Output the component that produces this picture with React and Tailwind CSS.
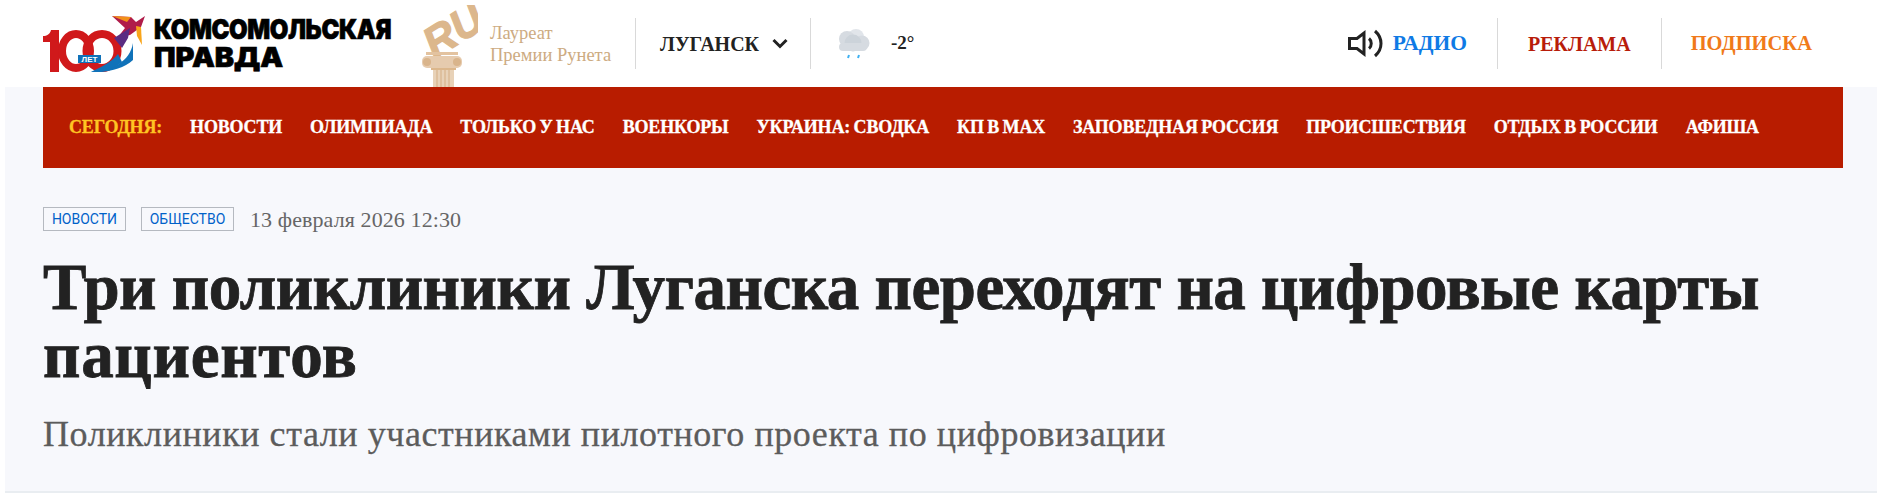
import React from "react";

const navItems = [
  "Новости",
  "Олимпиада",
  "Только у нас",
  "Военкоры",
  "Украина: сводка",
  "КП в MAX",
  "Заповедная Россия",
  "Происшествия",
  "Отдых в России",
  "Афиша",
];

// logo: red 100, blue swoosh, bird. viewBox is in page pixels
const Logo = () => (
  <svg width="102" height="56" viewBox="43 14 102 56" className="shrink-0">
    <path d="M51 28 L59 28 L59 70 L50 70 L50 40 L43 40 L43 34 C47 34 50 32 51 28 Z" fill="#d0191b" />
    <ellipse cx="76" cy="49" rx="14" ry="17" fill="none" stroke="#d0191b" strokeWidth="8" />
    <ellipse cx="102" cy="49" rx="15.5" ry="17" fill="none" stroke="#d0191b" strokeWidth="8" />
    <path d="M91 70 C112 68 130 60 133 41 L133 58 C122 68 104 71 91 70 Z" fill="#1072b9" />
    <path d="M91 70 C98 66 110 62 118 52 L122 60 C112 68 102 71 91 70 Z" fill="#1072b9" />
    <rect x="78" y="53" width="23" height="8" fill="#1072b9" />
    <text x="89.5" y="60" textAnchor="middle" fontSize="8" fontWeight="700" fill="#fff" fontFamily="Liberation Sans">ЛЕТ</text>
    <path d="M112 14 L131 15 L136 20 L145 14 L141 25 L130 33 L118 35 L125 26 Z" fill="#b01c4a" />
    <path d="M114 36 L130 26 L128 36 L122 46 Z" fill="#5a2d82" />
    <path d="M112 14 L131 15 L127 20 Z" fill="#f39019" />
    <path d="M136 24 L141 25 L142 43 L137 34 Z" fill="#f9a51a" />
  </svg>
);

// RU statue on a column
const Award = () => (
  <svg width="57" height="82" viewBox="421 5 57 82" className="shrink-0">
    <text x="453" y="45" textAnchor="middle" fontSize="43" fontWeight="700" fontStyle="italic" fill="#dcb78c" stroke="#dcb78c" strokeWidth="1.2" fontFamily="Liberation Sans" transform="rotate(-32 453 30)">RU</text>
    <rect x="426" y="52" width="32" height="3" fill="#e3c3a0" />
    <rect x="422" y="56" width="40" height="12" rx="5" fill="#e6cbae" />
    <circle cx="427" cy="62" r="4" fill="#d9b48b" />
    <circle cx="457" cy="62" r="4" fill="#d9b48b" />
    <rect x="431" y="68" width="25" height="2" fill="#dcb78c" />
    <rect x="433" y="70" width="21" height="17" fill="#e8d2b8" />
    <path d="M437 70 V87 M441 70 V87 M445 70 V87 M449 70 V87" stroke="#d4ae84" strokeWidth="1" />
  </svg>
);

const Weather = () => (
  <svg width="34" height="31" viewBox="0 0 34 31" className="shrink-0">
    <circle cx="20" cy="9" r="8" fill="#e1e5ea" />
    <circle cx="11" cy="11" r="8" fill="#d6dbe1" />
    <circle cx="26" cy="15" r="7.5" fill="#d6dbe1" />
    <circle cx="17" cy="15" r="8.5" fill="#ccd3da" />
    <rect x="3" y="15" width="28" height="8" rx="4" fill="#d6dbe1" />
    <path d="M13 27 L12 30 M23 27 L22 30" stroke="#3fb1f2" strokeWidth="2" />
  </svg>
);

const Speaker = () => (
  <svg width="36" height="29" viewBox="0 0 36 29" fill="none" stroke="#222" strokeWidth="3" className="shrink-0">
    <path d="M1.5 9.5 H9 L16 4 V25 L9 19.5 H1.5 Z" />
    <path d="M21 9.5 C24 12 24 17 21 19.5" />
    <path d="M27 2 C35 9 35 20 27 27" />
  </svg>
);

const Chevron = () => (
  <svg width="16" height="11" viewBox="0 0 16 11" fill="none" stroke="#222" strokeWidth="3" className="shrink-0">
    <path d="M1.5 2 L8 8.5 L14.5 2" />
  </svg>
);

const Divider = () => <div className="h-[51px] w-px bg-[#d9d9d9] shrink-0" />;

export default function App() {
  return (
    <div className="h-[493px] w-[1877px] bg-white overflow-hidden font-['Liberation_Serif',serif]">
      <header className="h-[87px] flex items-center pl-[43px]">
        <Logo />
        <div className="ml-[9px] w-[246px] font-['Inter',sans-serif] font-black text-[24px] leading-[25px] text-black uppercase whitespace-nowrap [-webkit-text-stroke:0.6px_#000]">
          <div className="origin-left scale-y-[1.12] tracking-[-0.4px]">Комсомольская</div>
          <div className="mt-[3px] origin-left scale-x-[1.2] scale-y-[1.12]">Правда</div>
        </div>
        <div className="ml-[21px] self-end"><Award /></div>
        <div className="ml-[12px] w-[122px] text-[18.5px] leading-[22px] text-[#cdab82] whitespace-nowrap">
          <div>Лауреат</div>
          <div>Премии Рунета</div>
        </div>
        <div className="ml-[23px]"><Divider /></div>
        <div className="ml-[24px] w-[98px] font-bold text-[20px] text-[#222] whitespace-nowrap">ЛУГАНСК</div>
        <div className="ml-[14px]"><Chevron /></div>
        <div className="ml-[22px]"><Divider /></div>
        <div className="ml-[25px]"><Weather /></div>
        <div className="ml-[21px] font-bold text-[19px] text-[#222]">-2°</div>
        <div className="ml-auto flex items-center pr-[65px]">
          <Speaker />
          <span className="ml-[9px] font-bold text-[21.5px] text-[#0f7ae5]">РАДИО</span>
          <div className="ml-[30px]"><Divider /></div>
          <span className="ml-[30px] font-bold text-[20px] text-[#b81c0a]">РЕКЛАМА</span>
          <div className="ml-[30px]"><Divider /></div>
          <span className="ml-[29px] font-bold text-[20.5px] text-[#f07a1a]">ПОДПИСКА</span>
        </div>
      </header>

      <div className="ml-[5px] h-[406px] bg-[#f7f8fc] border-b-2 border-[#e9edf1] pl-[38px] pr-[34px]">
        <nav className="h-[81px] bg-[#b81c00] flex items-center pl-[26px] gap-[28px] text-[18px] tracking-[-0.18px] [word-spacing:-0.8px] font-bold uppercase text-white whitespace-nowrap [-webkit-text-stroke:0.3px]">
          <span className="text-[#ffc423]">Сегодня:</span>
          {navItems.map((item) => (
            <a key={item}>{item}</a>
          ))}
        </nav>

        <div className="mt-[39px] flex items-center h-[24px]">
          <span className="h-[24px] w-[83px] flex items-center justify-center border border-[#b5b9c0] font-['Roboto',sans-serif] text-[14px] text-[#0061c9]">НОВОСТИ</span>
          <span className="ml-[15px] h-[24px] w-[93px] flex items-center justify-center border border-[#b5b9c0] font-['Roboto',sans-serif] text-[14px] text-[#0061c9]">ОБЩЕСТВО</span>
          <span className="ml-[16px] text-[22px] tracking-[0.1px] text-[#666]">13 февраля 2026 12:30</span>
        </div>
        <h1 className="mt-[22px] font-bold text-[65px] leading-[68px] text-[#222] [-webkit-text-stroke:0.8px_#222]">
          <span className="block tracking-[-0.5px]">Три поликлиники Луганска переходят на цифровые карты</span>
          <span className="block tracking-[0.7px]">пациентов</span>
        </h1>
        <p className="mt-[24px] text-[36px] leading-[42px] tracking-[0.57px] text-[#5c5c5c] [-webkit-text-stroke:0.3px]">
          Поликлиники стали участниками пилотного проекта по цифровизации
        </p>
      </div>
    </div>
  );
}
